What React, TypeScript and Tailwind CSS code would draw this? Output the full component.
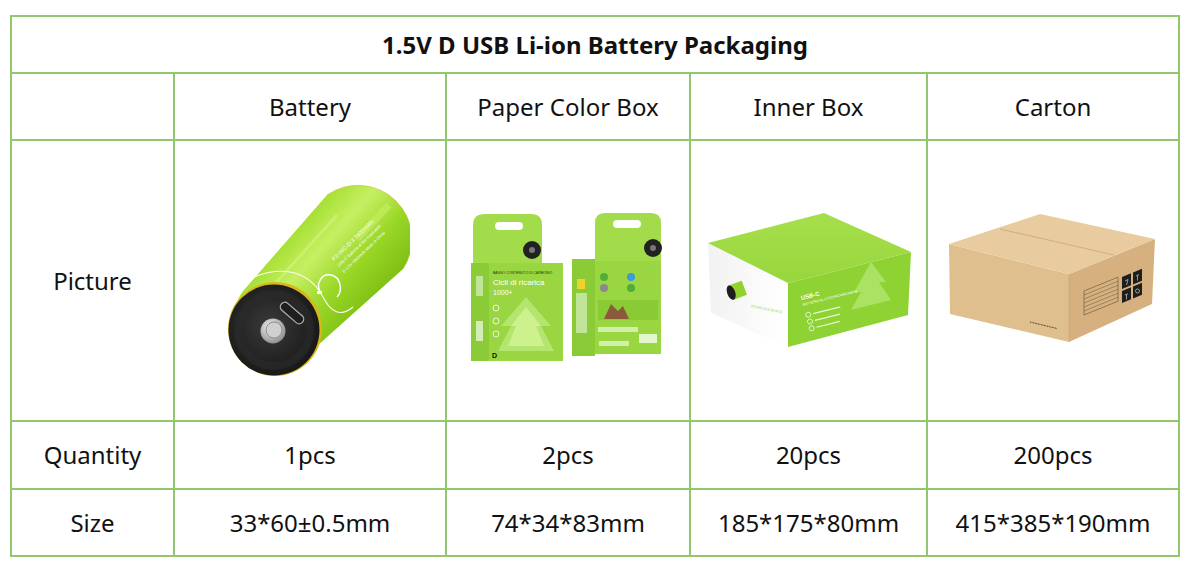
import React from "react";

const cell = "border-2 border-[#92c66f] text-center align-middle";

function BatteryPic() {
  return (
    <svg width="200" height="210" viewBox="209 175 200 210">
      <defs>
        <linearGradient id="bodyG" x1="240" y1="290" x2="318" y2="360" gradientUnits="userSpaceOnUse">
          <stop offset="0" stopColor="#a6e033" />
          <stop offset="0.3" stopColor="#c6ef63" />
          <stop offset="0.65" stopColor="#9ad727" />
          <stop offset="1" stopColor="#7fc114" />
        </linearGradient>
        <radialGradient id="faceG" cx="0.45" cy="0.45" r="0.6">
          <stop offset="0" stopColor="#3a3a3a" />
          <stop offset="1" stopColor="#161616" />
        </radialGradient>
        <radialGradient id="btnG" cx="0.4" cy="0.35" r="0.7">
          <stop offset="0" stopColor="#f4f4f4" />
          <stop offset="1" stopColor="#8a8a8a" />
        </radialGradient>
      </defs>
      <path d="M242,290 L326,194 A54,54 0 0 1 402,268 L316,345 A46,46 0 0 1 242,290 Z" fill="url(#bodyG)" />
      <path d="M326,194 A54,54 0 0 1 402,268" fill="none" stroke="#c9b21a" strokeWidth="1" opacity="0.5" />
      <path d="M262,296 L336,214" stroke="#e4ff9c" strokeWidth="3" opacity="0.35" />
      <path d="M356,238 L388,204" stroke="#c6ef63" strokeWidth="7" opacity="0.6" />
      <path d="M320,292 C314,284 320,272 330,274 C340,276 342,290 336,296" stroke="#ffffff" strokeWidth="1.5" fill="none" />
      <rect x="316" y="290" width="5" height="3" fill="#ffffff" />
      <path d="M236,288 C262,264 304,262 322,296 C330,312 340,316 352,306" stroke="#ffffff" strokeWidth="1.1" fill="none" opacity="0.95" />
      <text x="0" y="0" fontSize="5.5" fill="#ffffff" transform="translate(333 260) rotate(-44)" fontFamily="Liberation Sans, sans-serif">P2-04C-D-3 7400mWh</text>
      <text x="0" y="0" fontSize="4" fill="#ffffff" transform="translate(338 266) rotate(-44)" fontFamily="Liberation Sans, sans-serif">USB-C Batteria al litio ricaricabile</text>
      <text x="0" y="0" fontSize="4" fill="#ffffff" transform="translate(343 272) rotate(-44)" fontFamily="Liberation Sans, sans-serif">D 1.5V 4900mAh Made in China</text>
      <circle cx="274" cy="328" r="47" fill="#d6b81c" />
      <circle cx="273" cy="329" r="45.5" fill="url(#faceG)" />
      <circle cx="273" cy="329" r="36" fill="none" stroke="#2c2c2c" strokeWidth="8" opacity="0.6" />
      <rect x="277" y="307.5" width="28" height="9" rx="4.5" fill="#1e1e1e" stroke="#b0b0b0" strokeWidth="1.3" transform="rotate(41 291 312)" />
      <circle cx="272" cy="330" r="12.5" fill="url(#btnG)" />
      <circle cx="273" cy="329" r="8" fill="#d0d0d0" stroke="#8e8e8e" strokeWidth="1" />
    </svg>
  );
}

function PaperBoxPic() {
  return (
    <svg width="210" height="160" viewBox="462 200 210 160">
      {/* left box */}
      <path d="M472,263 L472,224 Q472,213 484,213 L530,213 Q541,213 541,224 L541,263 Z" fill="#a2dc4a" />
      <rect x="494" y="221" width="28" height="8" rx="4" fill="#ffffff" />
      <circle cx="531" cy="249" r="9" fill="#222" />
      <circle cx="531" cy="249" r="3" fill="#777" />
      <rect x="470" y="262" width="18" height="98" fill="#8bcb38" />
      <rect x="488" y="262" width="74" height="98" fill="#9ad642" />
      <text x="492" y="273" fontSize="3.5" fill="#1d3b00" fontFamily="Liberation Sans, sans-serif">BASSO CONTENUTO DI CARBONIO</text>
      <text x="492" y="284" fontSize="8" fill="#ffffff" fontFamily="Liberation Sans, sans-serif">Cicli di ricarica</text>
      <text x="492" y="294" fontSize="7" fill="#ffffff" fontFamily="Liberation Sans, sans-serif">1000+</text>
      <path d="M525,296 L550,325 L540,325 L553,350 L497,350 L510,325 L500,325 Z" fill="#b9e97a" opacity="0.8" />
      <path d="M525,306 L540,325 L535,325 L543,345 L507,345 L515,325 L510,325 Z" fill="#cdf28d" />
      <circle cx="495" cy="307" r="3" fill="none" stroke="#ffffff" strokeWidth="0.8" />
      <circle cx="495" cy="320" r="3" fill="none" stroke="#ffffff" strokeWidth="0.8" />
      <circle cx="495" cy="333" r="3" fill="none" stroke="#ffffff" strokeWidth="0.8" />
      <rect x="475" y="275" width="7" height="20" fill="#d9efc2" opacity="0.7" />
      <rect x="475" y="320" width="7" height="20" fill="#e6f4d8" opacity="0.8" />
      <text x="491" y="357" fontSize="7" fontWeight="bold" fill="#111" fontFamily="Liberation Sans, sans-serif">D</text>
      {/* right box */}
      <path d="M594,260 L594,222 Q594,212 604,212 L650,212 Q660,212 660,222 L660,260 Z" fill="#a2dc4a" />
      <rect x="612" y="219" width="28" height="8" rx="4" fill="#ffffff" />
      <circle cx="652" cy="247" r="9" fill="#222" />
      <circle cx="652" cy="247" r="3" fill="#777" />
      <rect x="571" y="258" width="23" height="97" fill="#8bcb38" />
      <rect x="594" y="260" width="66" height="93" fill="#9ad642" />
      <rect x="576" y="278" width="8" height="10" fill="#f2d12a" />
      <rect x="575" y="292" width="11" height="40" fill="#d9efc2" opacity="0.7" />
      <circle cx="603" cy="276" r="4" fill="#4fae3a" />
      <circle cx="603" cy="287" r="4" fill="#8a8a8a" />
      <circle cx="630" cy="276" r="4" fill="#3d9ad6" />
      <circle cx="630" cy="287" r="4" fill="#4fae3a" />
      <rect x="597" y="299" width="60" height="20" fill="#8acb35" />
      <path d="M603,318 L610,303 L617,310 L622,305 L628,318 Z" fill="#8a5b3a" />
      <rect x="597" y="326" width="40" height="5" fill="#f5fff0" opacity="0.6" />
      <rect x="638" y="333" width="18" height="9" fill="#f5fff0" opacity="0.8" />
      <rect x="598" y="340" width="30" height="5" fill="#f5fff0" opacity="0.6" />
    </svg>
  );
}

function InnerBoxPic() {
  return (
    <svg width="215" height="145" viewBox="700 208 215 145">
      <defs>
        <linearGradient id="wG" x1="0" y1="0" x2="1" y2="0">
          <stop offset="0" stopColor="#f2f2f2" />
          <stop offset="1" stopColor="#ffffff" />
        </linearGradient>
        <linearGradient id="tG" x1="0" y1="0" x2="0" y2="1">
          <stop offset="0" stopColor="#a6df4c" />
          <stop offset="1" stopColor="#98d63c" />
        </linearGradient>
      </defs>
      <polygon points="707,243 710,313 787,347 787,283" fill="url(#wG)" />
      <polygon points="787,283 910,252 907,315 787,347" fill="#8ed233" />
      <polygon points="707,243 823,213 910,252 787,283" fill="url(#tG)" />
      <path d="M870,262 L885,282 L878,282 L890,300 L850,310 L860,292 L853,292 Z" fill="#b6e878" opacity="0.7" />
      <g transform="rotate(-20 736 291)">
        <rect x="730" y="283" width="14" height="15" fill="#93d12e" />
        <ellipse cx="730" cy="290.5" rx="4" ry="7.5" fill="#1e1e1e" />
      </g>
      <text x="750" y="307" fontSize="3.5" fill="#8ed233" transform="rotate(12 750 307)" fontFamily="Liberation Sans, sans-serif">P2-04C-D-3      20 PCS</text>
      <g transform="rotate(-14 800 298)">
        <text x="800" y="300" fontSize="6" fontWeight="bold" fill="#ffffff" fontFamily="Liberation Sans, sans-serif">USB-C</text>
        <text x="800" y="306" fontSize="3.5" fill="#ffffff" fontFamily="Liberation Sans, sans-serif">BATTERIA AL LITIO RICARICABILE</text>
        <circle cx="803" cy="316" r="2.5" fill="none" stroke="#fff" strokeWidth="0.7" />
        <circle cx="803" cy="323" r="2.5" fill="none" stroke="#fff" strokeWidth="0.7" />
        <circle cx="803" cy="330" r="2.5" fill="none" stroke="#fff" strokeWidth="0.7" />
        <rect x="808" y="315.5" width="28" height="1.2" fill="#e8fbd0" />
        <rect x="808" y="322.5" width="26" height="1.2" fill="#e8fbd0" />
        <rect x="808" y="329.5" width="24" height="1.2" fill="#e8fbd0" />
      </g>
    </svg>
  );
}

// parallelogram on the carton's right face (slope of its top edge)
function face(x: number, y: number, w: number, h: number) {
  const s = -0.407;
  return `${x},${y} ${x + w},${y + s * w} ${x + w},${y + s * w + h} ${x},${y + h}`;
}

function CartonPic() {
  return (
    <svg width="215" height="140" viewBox="944 210 215 140">
      <polygon points="947,243 948,313 1067,341 1067,273" fill="#e0bf8f" />
      <polygon points="1067,273 1153,238 1150,303 1067,341" fill="#d6b17f" />
      <polygon points="947,243 1038,213 1153,238 1067,273" fill="#e8cc9f" />
      <path d="M998,228 L1112,254" stroke="#c9a676" strokeWidth="0.8" />
      <path d="M1067,273 L1067,341" stroke="#c7a171" strokeWidth="0.6" />
      <polygon points={face(1120, 276, 9, 12)} fill="#1e1e1e" />
      <polygon points={face(1131, 271.5, 9, 12)} fill="#1e1e1e" />
      <polygon points={face(1120, 290, 9, 12)} fill="#1e1e1e" />
      <polygon points={face(1131, 285.5, 9, 12)} fill="#1e1e1e" />
      <g stroke="#e8e8e8" strokeWidth="0.6" fill="none">
        <path d="M1123,280 L1126,278.5 L1124.5,284" />
        <path d="M1134,275 l3,-1.5 M1135.5,274.5 l0,5" />
        <path d="M1123,294 l3,-1.2 M1124.5,293.5 l0,5" />
        <circle cx="1135.5" cy="290" r="2" />
      </g>
      <polygon points={face(1082, 290, 34, 24)} fill="none" stroke="#4a3a28" strokeWidth="0.5" />
      <g stroke="#4a3a28" strokeWidth="0.4">
        <path d="M1082,294 L1116,280.2" />
        <path d="M1082,298 L1116,284.2" />
        <path d="M1082,302 L1116,288.2" />
        <path d="M1082,306 L1116,292.2" />
        <path d="M1082,310 L1116,296.2" />
      </g>
      <path d="M1028,321 L1055,327.5" stroke="#4a3a28" strokeWidth="1" strokeDasharray="1 0.6" />
    </svg>
  );
}

export default function App() {
  return (
    <div className="w-[1194px] h-[569px] bg-white pt-[15px] pl-[10px] font-['Noto_Sans','Open_Sans',sans-serif] text-[#111] text-[24px]">
      <table className="border-collapse table-fixed w-[1168px]">
        <colgroup>
          <col className="w-[163px]" />
          <col className="w-[272px]" />
          <col className="w-[244px]" />
          <col className="w-[237px]" />
          <col className="w-[252px]" />
        </colgroup>
        <tbody>
          <tr className="h-[57px]">
            <td colSpan={5} className={`${cell} font-bold text-[24px]`}>
              1.5V D USB Li-ion Battery Packaging
            </td>
          </tr>
          <tr className="h-[67px]">
            <td className={cell}></td>
            <td className={cell}>Battery</td>
            <td className={cell}>Paper Color Box</td>
            <td className={cell}>Inner Box</td>
            <td className={cell}>Carton</td>
          </tr>
          <tr className="h-[281px]">
            <td className={cell}>Picture</td>
            <td className={cell}>
              <div className="flex justify-center">
                <BatteryPic />
              </div>
            </td>
            <td className={cell}>
              <div className="flex justify-center">
                <PaperBoxPic />
              </div>
            </td>
            <td className={cell}>
              <div className="flex justify-center">
                <InnerBoxPic />
              </div>
            </td>
            <td className={cell}>
              <div className="flex justify-center">
                <CartonPic />
              </div>
            </td>
          </tr>
          <tr className="h-[68px]">
            <td className={cell}>Quantity</td>
            <td className={cell}>1pcs</td>
            <td className={cell}>2pcs</td>
            <td className={cell}>20pcs</td>
            <td className={cell}>200pcs</td>
          </tr>
          <tr className="h-[67px]">
            <td className={cell}>Size</td>
            <td className={cell}>33*60±0.5mm</td>
            <td className={cell}>74*34*83mm</td>
            <td className={cell}>185*175*80mm</td>
            <td className={cell}>415*385*190mm</td>
          </tr>
        </tbody>
      </table>
    </div>
  );
}
